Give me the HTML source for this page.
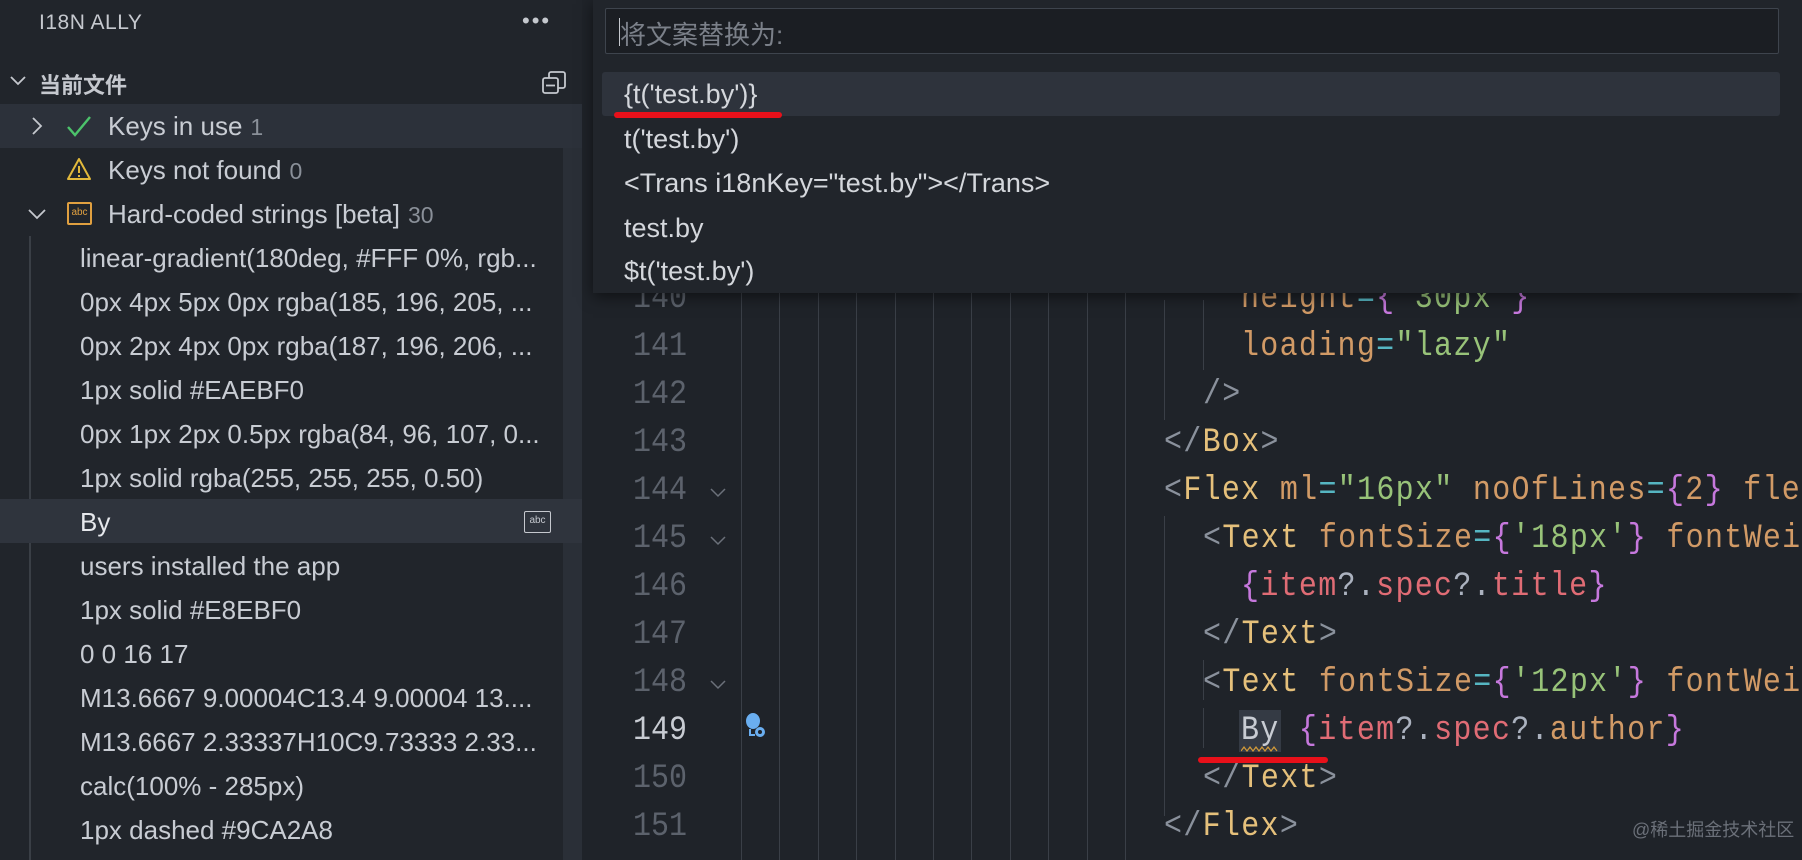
<!DOCTYPE html>
<html><head><meta charset="utf-8"><style>
*{margin:0;padding:0;box-sizing:border-box}
body{width:1802px;height:860px;overflow:hidden;background:#1f2329;font-family:"Liberation Sans","Noto Sans CJK SC",sans-serif;position:relative}
.sb{position:absolute;left:0;top:0;width:582px;height:860px;background:#21252b}
.a{position:absolute;white-space:nowrap}
.row{position:absolute;left:0;width:582px;height:44px;line-height:44px;font-size:26px;color:#c8ccd3;white-space:nowrap}
.cnt{color:#8a9099;margin-left:8px;font-size:23px}
.ln{position:absolute;right:1115px;font-family:"Liberation Mono",monospace;font-size:30px;color:#5c626c;height:48px;line-height:48px;text-align:right;transform:scaleY(1.15)}
.code{position:absolute;font-family:"Liberation Mono",monospace;font-size:30px;letter-spacing:1.3px;height:48px;line-height:48px;white-space:pre;color:#abb2bf;transform:scaleY(1.15);transform-origin:left center}
.g{position:absolute;width:1px;background:#3a3f47}
.t{color:#e5c07b}.at{color:#d19a66}.eq{color:#56b6c2}.s{color:#98c379}.b{color:#c678dd}.v{color:#e06c75}.p{color:#8a919c}
.qi{position:absolute;left:624px;font-size:27px;color:#d4d7dc;height:44px;line-height:44px;white-space:nowrap}
</style></head><body>
<div class="sb"></div>
<div class="a" style="left:563px;top:104px;width:19px;height:756px;background:#2a2f37"></div>
<div class="a" style="left:39px;top:11px;font-size:21px;color:#c5c8ce;letter-spacing:.5px">I18N ALLY</div>
<div class="a" style="left:522px;top:8px;font-size:22px;color:#c5c8ce;letter-spacing:2px">•••</div>
<div class="a" style="left:8px;top:70px">
<svg width="20" height="20" viewBox="0 0 20 20"><path d="M3 7l7 7 7-7" stroke="#c5c8ce" stroke-width="1.8" fill="none"/></svg></div>
<div class="a" style="left:39px;top:68px;font-size:22px;font-weight:bold;color:#c5c8ce">当前文件</div>
<svg class="a" style="left:541px;top:70px" width="26" height="26" viewBox="0 0 26 26"><rect x="2" y="8" width="15" height="15" rx="2" stroke="#c5c8ce" stroke-width="1.8" fill="#21252b"/><path d="M8 8V4a2 2 0 0 1 2-2h12a2 2 0 0 1 2 2v12a2 2 0 0 1-2 2h-5" stroke="#c5c8ce" stroke-width="1.8" fill="none"/><path d="M5 15.5h9" stroke="#c5c8ce" stroke-width="1.8"/></svg>

<div class="row" style="top:104px;background:#2c313a;width:582px"></div>
<div class="row" style="top:104px"><svg style="position:absolute;left:28px;top:12px" width="18" height="20" viewBox="0 0 18 20"><path d="M5 2l8 8-8 8" stroke="#c5c8ce" stroke-width="1.8" fill="none"/></svg><svg style="position:absolute;left:66px;top:10px" width="26" height="24" viewBox="0 0 26 24"><path d="M2 13l7 8L24 3" stroke="#4cc36b" stroke-width="2.4" fill="none"/></svg><span style="position:absolute;left:108px">Keys in use<span class="cnt">1</span></span></div>
<div class="row" style="top:148px"><svg style="position:absolute;left:66px;top:8px" width="26" height="26" viewBox="0 0 26 26"><path d="M13 3L24 23H2Z" stroke="#e2b93b" stroke-width="2" fill="none" stroke-linejoin="round"/><path d="M13 10v7M13 19v2" stroke="#e2b93b" stroke-width="2"/></svg><span style="position:absolute;left:108px">Keys not found<span class="cnt">0</span></span></div>
<div class="row" style="top:192px"><svg style="position:absolute;left:26px;top:13px" width="22" height="18" viewBox="0 0 22 18"><path d="M3 5l8 8 8-8" stroke="#c5c8ce" stroke-width="1.8" fill="none"/></svg><div style="position:absolute;left:67px;top:10px;width:25px;height:23px;border:2px solid #e0a040;border-radius:2px;font-size:10px;line-height:18px;text-align:center;color:#e0a040">abc</div><span style="position:absolute;left:108px">Hard-coded strings [beta]<span class="cnt">30</span></span></div>
<div class="a" style="left:29px;top:236px;width:2px;height:624px;background:#3a3f46"></div>
<div class="row" style="top:499px;background:#2f343d;width:582px"></div>
<div class="row" style="top:236px"><span style="position:absolute;left:80px">linear-gradient(180deg, #FFF 0%, rgb...</span></div>
<div class="row" style="top:280px"><span style="position:absolute;left:80px">0px 4px 5px 0px rgba(185, 196, 205, ...</span></div>
<div class="row" style="top:324px"><span style="position:absolute;left:80px">0px 2px 4px 0px rgba(187, 196, 206, ...</span></div>
<div class="row" style="top:368px"><span style="position:absolute;left:80px">1px solid #EAEBF0</span></div>
<div class="row" style="top:412px"><span style="position:absolute;left:80px">0px 1px 2px 0.5px rgba(84, 96, 107, 0...</span></div>
<div class="row" style="top:456px"><span style="position:absolute;left:80px">1px solid rgba(255, 255, 255, 0.50)</span></div>
<div class="row" style="top:500px"><span style="position:absolute;left:80px;color:#e6e8ec">By</span><div style="position:absolute;left:524px;top:11px;width:27px;height:22px;border:1.5px solid #c5c8ce;border-radius:2px;font-size:10px;line-height:18px;text-align:center;color:#c5c8ce">abc</div></div>
<div class="row" style="top:544px"><span style="position:absolute;left:80px">users installed the app</span></div>
<div class="row" style="top:588px"><span style="position:absolute;left:80px">1px solid #E8EBF0</span></div>
<div class="row" style="top:632px"><span style="position:absolute;left:80px">0 0 16 17</span></div>
<div class="row" style="top:676px"><span style="position:absolute;left:80px">M13.6667 9.00004C13.4 9.00004 13....</span></div>
<div class="row" style="top:720px"><span style="position:absolute;left:80px">M13.6667 2.33337H10C9.73333 2.33...</span></div>
<div class="row" style="top:764px"><span style="position:absolute;left:80px">calc(100% - 285px)</span></div>
<div class="row" style="top:808px"><span style="position:absolute;left:80px">1px dashed #9CA2A8</span></div>

<div class="g" style="left:741px;top:0;height:860px"></div>
<div class="g" style="left:779px;top:0;height:860px"></div>
<div class="g" style="left:818px;top:0;height:860px"></div>
<div class="g" style="left:856px;top:0;height:860px"></div>
<div class="g" style="left:895px;top:0;height:860px"></div>
<div class="g" style="left:933px;top:0;height:860px"></div>
<div class="g" style="left:971px;top:0;height:860px"></div>
<div class="g" style="left:1010px;top:0;height:860px"></div>
<div class="g" style="left:1048px;top:0;height:860px"></div>
<div class="g" style="left:1087px;top:0;height:860px"></div>
<div class="g" style="left:1125px;top:0;height:860px"></div>
<div class="g" style="left:1164px;top:300px;height:120px"></div>
<div class="g" style="left:1164px;top:516px;height:300px"></div>
<div class="g" style="left:1203px;top:300px;height:70px"></div>
<div class="g" style="left:1203px;top:660px;height:40px"></div>
<div class="g" style="left:1203px;top:708px;height:40px"></div>

<div class="ln" style="top:275px">140</div>
<div class="ln" style="top:323px">141</div>
<div class="ln" style="top:371px">142</div>
<div class="ln" style="top:419px">143</div>
<div class="ln" style="top:467px">144</div>
<div class="ln" style="top:515px">145</div>
<div class="ln" style="top:563px">146</div>
<div class="ln" style="top:611px">147</div>
<div class="ln" style="top:659px">148</div>
<div class="ln" style="top:707px;color:#c8ccd3">149</div>
<div class="ln" style="top:755px">150</div>
<div class="ln" style="top:803px">151</div>
<svg class="a" style="left:710px;top:488px" width="16" height="10" viewBox="0 0 16 10"><path d="M1 1l7 7 7-7" stroke="#6b717a" stroke-width="1.5" fill="none"/></svg>
<svg class="a" style="left:710px;top:536px" width="16" height="10" viewBox="0 0 16 10"><path d="M1 1l7 7 7-7" stroke="#6b717a" stroke-width="1.5" fill="none"/></svg>
<svg class="a" style="left:710px;top:680px" width="16" height="10" viewBox="0 0 16 10"><path d="M1 1l7 7 7-7" stroke="#6b717a" stroke-width="1.5" fill="none"/></svg>
<svg class="a" style="left:745px;top:712px" width="22" height="28" viewBox="0 0 22 28"><ellipse cx="8" cy="9" rx="7" ry="8" fill="#6aaef0"/><path d="M5 17v6h5" stroke="#6aaef0" stroke-width="2" fill="none"/><circle cx="15" cy="20" r="5" fill="#6aaef0"/><circle cx="15" cy="20" r="2" fill="#1f2329"/></svg>

<div class="code" style="left:1241px;top:275px"><span class="at">height</span><span class="eq">=</span><span class="b">{</span><span class="s">"30px"</span><span class="b">}</span></div>
<div class="code" style="left:1241px;top:323px"><span class="at">loading</span><span class="eq">=</span><span class="s">"lazy"</span></div>
<div class="code" style="left:1203px;top:371px"><span class="p">/&gt;</span></div>
<div class="code" style="left:1164px;top:419px"><span class="p">&lt;/</span><span class="t">Box</span><span class="p">&gt;</span></div>
<div class="code" style="left:1164px;top:467px"><span class="p">&lt;</span><span class="t">Flex</span> <span class="at">ml</span><span class="eq">=</span><span class="s">"16px"</span> <span class="at">noOfLines</span><span class="eq">=</span><span class="b">{</span><span class="at">2</span><span class="b">}</span> <span class="at">flexDir</span></div>
<div class="code" style="left:1203px;top:515px"><span class="p">&lt;</span><span class="t">Text</span> <span class="at">fontSize</span><span class="eq">=</span><span class="b">{</span><span class="s">'18px'</span><span class="b">}</span> <span class="at">fontWeight</span></div>
<div class="code" style="left:1241px;top:563px"><span class="b">{</span><span class="v">item</span>?.<span class="v">spec</span>?.<span class="v">title</span><span class="b">}</span></div>
<div class="code" style="left:1203px;top:611px"><span class="p">&lt;/</span><span class="t">Text</span><span class="p">&gt;</span></div>
<div class="code" style="left:1203px;top:659px"><span class="p">&lt;</span><span class="t">Text</span> <span class="at">fontSize</span><span class="eq">=</span><span class="b">{</span><span class="s">'12px'</span><span class="b">}</span> <span class="at">fontWeight</span></div>
<div class="a" style="left:1239px;top:710px;width:42px;height:42px;background:#343a44"></div>
<div class="code" style="left:1241px;top:707px"><span style="color:#c8ccd3">By</span> <span class="b">{</span><span class="v">item</span>?.<span class="v">spec</span>?.<span class="at">author</span><span class="b">}</span></div>
<svg class="a" style="left:1241px;top:746px" width="38" height="6" viewBox="0 0 38 6"><path d="M0 5l3-4 3 4 3-4 3 4 3-4 3 4 3-4 3 4 3-4 3 4 3-4 3 4" stroke="#d19a3a" stroke-width="1.2" fill="none"/></svg>
<div class="code" style="left:1203px;top:755px"><span class="p">&lt;/</span><span class="t">Text</span><span class="p">&gt;</span></div>
<div class="code" style="left:1164px;top:803px"><span class="p">&lt;/</span><span class="t">Flex</span><span class="p">&gt;</span></div>
<div class="a" style="left:1198px;top:757px;width:130px;height:6px;background:#e8101a;border-radius:3px"></div>
<div class="a" style="left:1632px;top:816px;font-size:18px;color:#6b7079">@稀土掘金技术社区</div>

<div class="a" style="left:593px;top:0;width:1209px;height:293px;background:#21252b;box-shadow:0 4px 14px rgba(0,0,0,.5)"></div>
<div class="a" style="left:605px;top:8px;width:1174px;height:46px;background:#1b1e23;border:1.5px solid #3e444d;border-radius:2px"></div>
<div class="a" style="left:619px;top:18px;width:1px;height:28px;background:#c5c8ce"></div>
<div class="a" style="left:620px;top:15px;font-size:26px;color:#7b8089">将文案替换为:</div>
<div class="a" style="left:602px;top:72px;width:1178px;height:44px;background:#2e333c;border-radius:3px"></div>
<div class="qi" style="top:72px">{t('test.by')}</div>
<div class="qi" style="top:117px">t('test.by')</div>
<div class="qi" style="top:161px">&lt;Trans i18nKey="test.by"&gt;&lt;/Trans&gt;</div>
<div class="qi" style="top:206px">test.by</div>
<div class="qi" style="top:249px">$t('test.by')</div>
<div class="a" style="left:614px;top:112px;width:168px;height:6px;background:#e8101a;border-radius:3px"></div>
</body></html>
